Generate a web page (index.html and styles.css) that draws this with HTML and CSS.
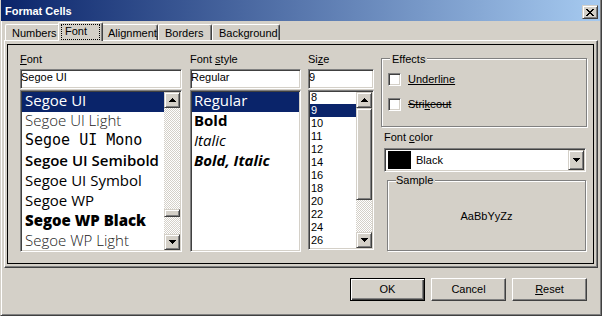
FILE: index.html
```html
<!DOCTYPE html>
<html>
<head>
<meta charset="utf-8">
<title>Format Cells</title>
<link rel="stylesheet" href="styles.css">
</head>
<body>
<div class="window">
  <div class="titlebar">
    <span class="title">Format Cells</span>
    <span class="close bevel-s"><svg width="8" height="7" viewBox="0 0 8 7" shape-rendering="crispEdges"><path d="M0 0h2v1H0z M6 0h2v1H6z M1 1h2v1H1z M5 1h2v1H5z M2 2h4v1H2z M3 3h2v1H3z M2 4h4v1H2z M1 5h2v1H1z M5 5h2v1H5z M0 6h2v1H0z M6 6h2v1H6z" fill="#000"/></svg></span>
  </div>
  <div class="tabs">
    <div class="tab w-num">Numbers</div>
    <div class="tab-sel"><span class="focus">Font</span></div>
    <div class="tab w-align">Alignment</div>
    <div class="tab w-bord">Borders</div>
    <div class="tab w-bg">Background</div>
  </div>
  <div class="panel">
    <div class="frame">
      <div class="col c1">
        <div class="lbl"><u>F</u>ont</div>
        <div class="edit">Segoe UI</div>
        <div class="list list-font">
          <div class="items">
            <div class="item sel">Segoe UI</div>
            <div class="item light">Segoe UI Light</div>
            <div class="item mono">Segoe UI Mono</div>
            <div class="item semi">Segoe UI Semibold</div>
            <div class="item">Segoe UI Symbol</div>
            <div class="item">Segoe WP</div>
            <div class="item black">Segoe WP Black</div>
            <div class="item light">Segoe WP Light</div>
          </div>
          <div class="vscroll">
            <div class="sbtn bevel-s"><svg width="7" height="4" viewBox="0 0 7 4" shape-rendering="crispEdges"><path d="M3 0h1v1H3z M2 1h3v1H2z M1 2h5v1H1z M0 3h7v1H0z" fill="#000"/></svg></div>
            <div class="track t-f1"></div>
            <div class="thumb bevel-s t-f2"></div>
            <div class="track t-f3"></div>
            <div class="sbtn bevel-s"><svg width="7" height="4" viewBox="0 0 7 4" shape-rendering="crispEdges"><path d="M0 0h7v1H0z M1 1h5v1H1z M2 2h3v1H2z M3 3h1v1H3z" fill="#000"/></svg></div>
          </div>
        </div>
      </div>
      <div class="col c2">
        <div class="lbl">Font <u>s</u>tyle</div>
        <div class="edit">Regular</div>
        <div class="list list-style">
          <div class="items">
            <div class="item st sel">Regular</div>
            <div class="item st b">Bold</div>
            <div class="item st i">Italic</div>
            <div class="item st b i">Bold, Italic</div>
          </div>
        </div>
      </div>
      <div class="col c3">
        <div class="lbl">Si<u>z</u>e</div>
        <div class="edit">9</div>
        <div class="list list-size">
          <div class="items">
            <div class="sizes">
              <div class="sitem">8</div>
              <div class="sitem sel">9</div>
              <div class="sitem">10</div>
              <div class="sitem">11</div>
              <div class="sitem">12</div>
              <div class="sitem">14</div>
              <div class="sitem">16</div>
              <div class="sitem">18</div>
              <div class="sitem">20</div>
              <div class="sitem">22</div>
              <div class="sitem">24</div>
              <div class="sitem">26</div>
            </div>
          </div>
          <div class="vscroll">
            <div class="sbtn bevel-s"><svg width="7" height="4" viewBox="0 0 7 4" shape-rendering="crispEdges"><path d="M3 0h1v1H3z M2 1h3v1H2z M1 2h5v1H1z M0 3h7v1H0z" fill="#000"/></svg></div>
            <div class="thumb bevel-s t-s1"></div>
            <div class="track t-s2"></div>
            <div class="sbtn bevel-s"><svg width="7" height="4" viewBox="0 0 7 4" shape-rendering="crispEdges"><path d="M0 0h7v1H0z M1 1h5v1H1z M2 2h3v1H2z M3 3h1v1H3z" fill="#000"/></svg></div>
          </div>
        </div>
      </div>
      <div class="col c4">
        <div class="group effects">
          <div class="gtitle">Effects</div>
          <div class="chk-row first"><span class="chk"></span><span class="ul">Underline</span></div>
          <div class="chk-row second"><span class="chk"></span><span class="st-through">Stri<u>k</u>eout</span></div>
        </div>
        <div class="lbl fc-lbl">Font <u>c</u>olor</div>
        <div class="combo">
          <span class="swatch"></span>
          <span class="combo-text">Black</span>
          <span class="dropbtn bevel-s"><svg width="7" height="4" viewBox="0 0 7 4" shape-rendering="crispEdges"><path d="M0 0h7v1H0z M1 1h5v1H1z M2 2h3v1H2z M3 3h1v1H3z" fill="#000"/></svg></span>
        </div>
        <div class="group sample">
          <div class="gtitle">Sample</div>
          <div class="sample-text">AaBbYyZz</div>
        </div>
      </div>
    </div>
  </div>
  <div class="btnrow">
    <div class="btn default">OK</div>
    <div class="btn">Cancel</div>
    <div class="btn"><span><u>R</u>eset</span></div>
  </div>
</div>
</body>
</html>
```
FILE: styles.css
```css
html, body {
  margin: 0;
  padding: 0;
  background: #d4d0c8;
}
body {
  font-family: "Liberation Sans", Arial, sans-serif;
  font-size: 11px;
  line-height: 13px;
  color: #000;
}
u { text-decoration: underline; }

.window {
  width: 602px;
  height: 316px;
  box-sizing: border-box;
  border-left: 1px solid #d4d0c8;
  border-right: 1px solid #404040;
  border-bottom: 1px solid #404040;
  box-shadow: inset 1px 0 #fff, inset -1px -1px #808080;
  display: flex;
  flex-direction: column;
  overflow: hidden;
}

.titlebar {
  height: 21px;
  margin: 0 1px 0 0;
  background: linear-gradient(to right, #0a246a, #a6caf0);
  display: flex;
  justify-content: space-between;
  align-items: flex-start;
  flex-shrink: 0;
}
.title {
  color: #fff;
  font-weight: bold;
  padding: 5px 0 0 4px;
}
.bevel-s {
  box-sizing: border-box;
  background: #d4d0c8;
  border: 1px solid;
  border-color: #d4d0c8 #404040 #404040 #d4d0c8;
  box-shadow: inset 1px 1px #fff, inset -1px -1px #808080;
}
.close {
  width: 16px;
  height: 14px;
  margin: 5px 2px 0 0;
  display: flex;
  align-items: center;
  justify-content: center;
}
.close svg { display: block; }

/* Tabs */
.tabs {
  height: 18px;
  margin: 1px 0 0 4px;
  display: flex;
  align-items: flex-end;
  flex-shrink: 0;
}
.tab {
  height: 16px;
  box-sizing: border-box;
  border-top: 1px solid #fff;
  border-left: 1px solid #fff;
  border-right: 1px solid #404040;
  box-shadow: inset -1px 0 #808080;
  border-radius: 2px 2px 0 0;
  padding: 2px 0 0 6px;
  white-space: nowrap;
}
.w-num { width: 55px; }
.w-align { width: 57px; }
.w-bord { width: 54px; }
.w-bg { width: 68px; }
.tab-sel {
  position: relative;
  z-index: 1;
  width: 45px;
  height: 19px;
  margin: 0 -2px -1px -2px;
  box-sizing: border-box;
  background: #d4d0c8;
  border-top: 1px solid #fff;
  border-left: 1px solid #fff;
  border-right: 1px solid #404040;
  box-shadow: inset -1px 0 #808080;
  border-radius: 2px 2px 0 0;
}
.focus {
  display: block;
  margin: 1px 0 0 2px;
  width: 39px;
  height: 16px;
  box-sizing: border-box;
  border: 1px dotted #000;
  padding-left: 3px;
  line-height: 12px;
}

/* Panel */
.panel {
  width: 594px;
  height: 228px;
  margin-left: 3px;
  box-sizing: border-box;
  border-top: 1px solid #fff;
  border-left: 1px solid #fff;
  border-right: 1px solid #404040;
  border-bottom: 1px solid #404040;
  box-shadow: inset -1px -1px #808080;
  padding: 3px 3px 3px 2px;
  flex-shrink: 0;
}
.frame {
  height: 100%;
  box-sizing: border-box;
  border: 1px solid #000;
  padding: 8px 0 0 12px;
  display: flex;
  align-items: flex-start;
}
.col {
  display: flex;
  flex-direction: column;
}
.c1 { width: 162px; margin-right: 8px; }
.c2 { width: 111px; margin-right: 7px; }
.c3 { width: 66px; margin-right: 7px; }
.c4 { width: 207px; }

.lbl {
  height: 13px;
  white-space: nowrap;
}

.edit {
  height: 20px;
  margin-top: 3px;
  box-sizing: border-box;
  border: 1px solid;
  border-color: #808080 #fff #fff #808080;
  box-shadow: inset 1px 1px #404040, inset -1px -1px #d4d0c8;
  background: #fff;
  padding: 1px 0 0 0;
  white-space: nowrap;
}
.list {
  margin-top: 1px;
  height: 162px;
  box-sizing: border-box;
  border: 1px solid;
  border-color: #808080 #fff #fff #808080;
  box-shadow: inset 1px 1px #404040, inset -1px -1px #d4d0c8;
  background: #fff;
  padding: 1px;
  display: flex;
}
.list-size { height: 160px; }
.items {
  flex: 1;
  min-width: 0;
}
.list-size .items { overflow: hidden; }
.item {
  height: 20px;
  line-height: 16px;
  padding-left: 3px;
  font-family: "Open Sans", "Noto Sans", sans-serif;
  font-size: 15px;
  white-space: nowrap;
  color: #000;
}
.item.st { padding-left: 2px; }
.item.light { font-weight: 300; color: #1a1a1a; }
.item.mono { font-family: "DejaVu Sans Mono", monospace; font-size: 15px; }
.item.semi { font-weight: 600; }
.item.black { font-weight: 800; }
.item.b { font-weight: 700; }
.item.i { font-style: italic; }
.sel { background: #0a246a; color: #fff; }
.item.sel { color: #fff; }

.sizes { margin-top: -1px; }
.sitem {
  height: 13px;
  line-height: 13px;
  padding-left: 1px;
}

.vscroll {
  width: 16px;
  display: flex;
  flex-direction: column;
  flex-shrink: 0;
}
.sbtn {
  height: 16px;
  display: flex;
  align-items: center;
  justify-content: center;
  flex-shrink: 0;
}
.sbtn svg, .dropbtn svg { display: block; }
.track {
  background-color: #fff;
  background-image: conic-gradient(#fff 25%, #d4d0c8 0 50%, #fff 0 75%, #d4d0c8 0);
  background-size: 2px 2px;
}
.thumb { flex-shrink: 0; }
.t-f1 { height: 101px; }
.t-f2 { height: 8px; }
.t-f3 { height: 17px; }
.t-s1 { height: 92px; }
.t-s2 { height: 32px; }

/* Group boxes */
.group {
  box-sizing: border-box;
  border: 1px solid #808080;
  box-shadow: inset 1px 1px #fff, 1px 1px #fff;
  display: flex;
  flex-direction: column;
}
.gtitle {
  width: max-content;
  background: #d4d0c8;
  padding: 0 2px;
  height: 13px;
}
.effects {
  margin-top: 5px;
  width: 206px;
  height: 69px;
  padding-left: 6px;
}
.effects .gtitle { margin: -6px 0 0 2px; }
.chk-row {
  display: flex;
  align-items: center;
  height: 13px;
  gap: 7px;
}
.chk-row.first { margin-top: 7px; }
.chk-row.second { margin-top: 12px; }
.chk {
  width: 13px;
  height: 13px;
  box-sizing: border-box;
  border: 1px solid;
  border-color: #808080 #fff #fff #808080;
  box-shadow: inset 1px 1px #404040, inset -1px -1px #d4d0c8;
  background: #fff;
  flex-shrink: 0;
}
.ul { text-decoration: underline; }
.st-through { text-decoration: line-through; }

.fc-lbl { margin: 4px 0 0 3px; }
.combo {
  margin: 4px 0 0 3px;
  width: 202px;
  height: 24px;
  box-sizing: border-box;
  border: 1px solid;
  border-color: #808080 #fff #fff #808080;
  box-shadow: inset 1px 1px #404040, inset -1px -1px #d4d0c8;
  background: #fff;
  padding: 1px;
  display: flex;
  align-items: center;
}
.swatch {
  width: 23px;
  height: 18px;
  margin-left: 2px;
  background: #000;
  flex-shrink: 0;
}
.combo-text {
  margin-left: 5px;
  flex: 1;
}
.dropbtn {
  width: 16px;
  height: 20px;
  display: flex;
  align-items: center;
  justify-content: center;
  flex-shrink: 0;
}

.sample {
  margin: 8px 0 0 6px;
  width: 199px;
  height: 71px;
}
.sample .gtitle { margin: -7px 0 0 8px; padding: 0 2px 0 0; }
.sample-text {
  margin-top: 23px;
  text-align: center;
}

/* Buttons */
.btnrow {
  display: flex;
  justify-content: flex-end;
  gap: 6px;
  margin: 10px 14px 0 0;
  flex-shrink: 0;
}
.btn {
  width: 75px;
  height: 23px;
  box-sizing: border-box;
  border: 1px solid;
  border-color: #fff #404040 #404040 #fff;
  box-shadow: inset -1px -1px #808080;
  display: flex;
  align-items: center;
  justify-content: center;
}
.btn.default {
  border-color: #000;
  box-shadow: inset 1px 1px #fff, inset -1px -1px #404040, inset -2px -2px #808080;
}
```
